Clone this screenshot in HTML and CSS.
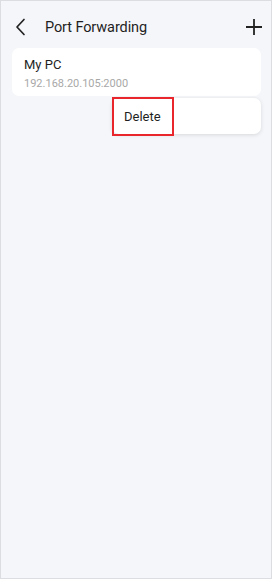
FILE: index.html
```html
<!DOCTYPE html>
<html>
<head>
<meta charset="utf-8">
<link rel="stylesheet" href="styles.css">
</head>
<body>
<div class="frame">
  <header class="topbar">
    <svg class="back" width="12" height="18" viewBox="0 0 12 18"><path d="M9 1.5 L2 9 L9 16.5" fill="none" stroke="#222" stroke-width="1.7" stroke-linecap="round" stroke-linejoin="round"/></svg>
    <div class="title">Port Forwarding</div>
    <svg class="plus" width="18" height="18" viewBox="0 0 18 18"><path d="M9 1 V17 M1 9 H17" fill="none" stroke="#222" stroke-width="1.8"/></svg>
  </header>
  <div class="list">
    <div class="card">
      <div class="name">My PC</div>
      <div class="addr">192.168.20.105:2000</div>
    </div>
    <div class="menu">
      <div class="menu-item">Delete</div>
    </div>
  </div>
</div>
</body>
</html>
```

FILE: styles.css
```css
html, body {
  margin: 0;
  padding: 0;
  background: #ffffff;
}
body {
  font-family: Roboto, "Noto Sans", "Liberation Sans", sans-serif;
  color: #222;
}
.frame {
  box-sizing: border-box;
  width: 272px;
  height: 579px;
  border: 1px solid #dcdde1;
  background: #f5f6fa;
}
.topbar {
  display: flex;
  align-items: center;
  height: 44px;
  padding: 8px 8px 0 12px;
  box-sizing: border-box;
}
.back {
  display: block;
  margin-left: 2px;
}
.title {
  flex: 1;
  margin-left: 18px;
  font-size: 14.5px;
  color: #1f1f1f;
  letter-spacing: -0.1px;
}
.plus {
  display: block;
}
.list {
  padding: 3px 10px 0 11px;
  display: flex;
  flex-direction: column;
  align-items: flex-end;
}
.card {
  align-self: stretch;
  background: #fff;
  border-radius: 7px;
  height: 48px;
  box-sizing: border-box;
  padding: 8px 12px 0 12px;
}
.name {
  font-size: 13px;
  line-height: 18px;
  color: #1f1f1f;
}
.addr {
  font-size: 11px;
  line-height: 16px;
  color: #a8a8a8;
  margin-top: 2px;
}
.menu {
  margin-top: 2px;
  width: 149px;
  height: 36px;
  background: #fff;
  border-radius: 7px;
  box-shadow: 0 1px 4px rgba(0, 0, 0, 0.12);
  display: flex;
  align-items: stretch;
}
.menu-item {
  box-sizing: border-box;
  width: 62px;
  height: 39px;
  margin-top: -1px;
  border: 2px solid #e8262b;
  font-size: 13px;
  color: #1f1f1f;
  padding-left: 10px;
  display: flex;
  align-items: center;
}
```
